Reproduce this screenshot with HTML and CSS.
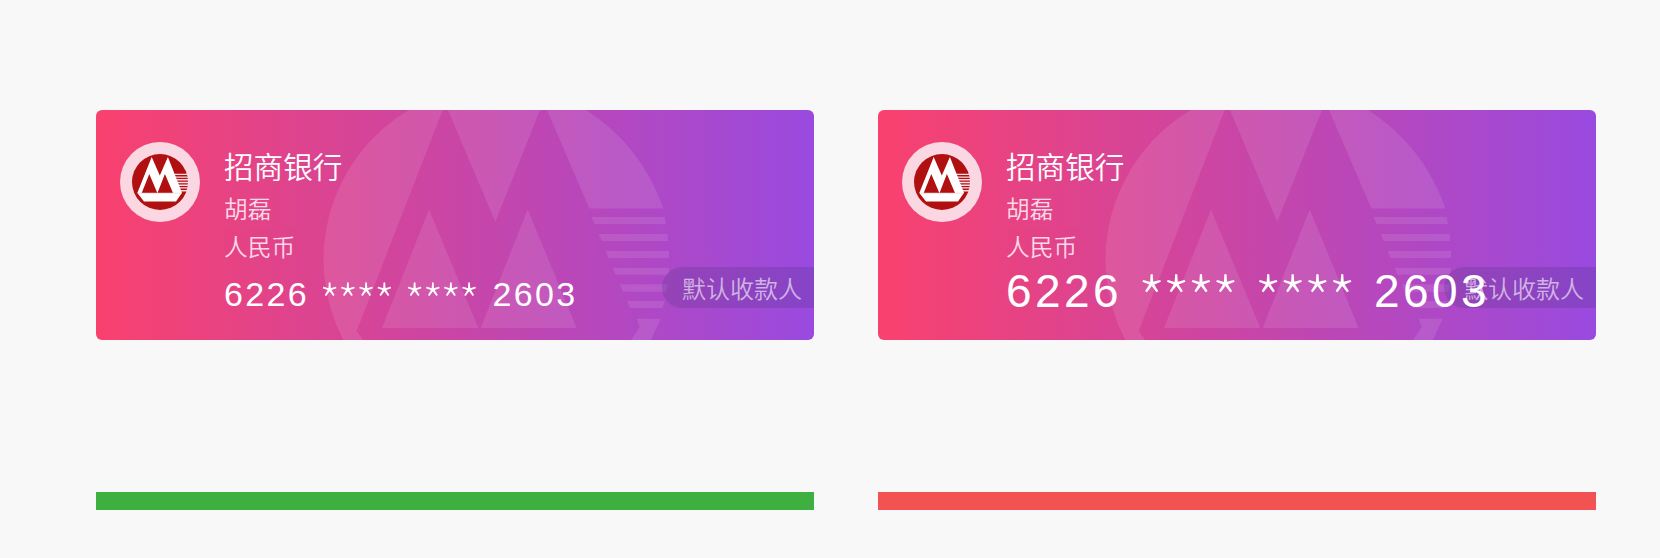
FILE: index.html
```html
<!DOCTYPE html>
<html lang="zh-CN">
<head>
<meta charset="utf-8">
<title>银行卡</title>
<link rel="stylesheet" href="styles.css">
</head>
<body>
<svg width="0" height="0" class="defs">
  <symbol id="mark" viewBox="0 0 718 230">
    <path d="M313 0A173.5 173.5 0 0 0 247.3 230H267.3L260.7 221 346.7 0ZM352 0 399.3 111.7 444 0ZM451 0 493.3 98.5H567.5Q545 35 490 0ZM333 99.5 286 218H382.3ZM431.7 99.5 384.7 218H480.7Z"/>
    <path d="M495.3 107H568.7L570 114H498.7ZM502.7 124H571.7L572 131H505.7ZM509.7 141H573V148H512.7ZM516.7 158H573L572.4 164.7H519.7ZM523.7 174.3H571.5L570.3 181.7H527ZM531 191H568.8L566.6 198H534.3ZM540.7 208.7H564.7L555 230H535L543.7 217Z"/>
  </symbol>
  <symbol id="logo" viewBox="0 0 80 80">
    <circle cx="40" cy="40" r="28" fill="#b01010"/>
    <path d="M54 31.8H68.500V33.100H54ZM54 34.400H68.500V35.800H54ZM54 37.100H68.500V38.500H54ZM54 39.800H68.500V41.300H54ZM54 42.500H68.500V43.900H54ZM54 45.200H68.500V46.600H54ZM54 47.900H68.500V49.500H54Z" fill="#fbdce5"/>
    <path fill="#fff" fill-rule="evenodd" d="M31.700 15 39.800 33.500 47.900 15 62 50.700 56 59.500H24L17.300 51ZM29.300 31.900 21.700 51H37.300ZM44.900 31.900 37.500 51H53Z"/>
    <path d="M18 51.200H61.500" stroke="#f3d5d8" stroke-width=".8"/>
  </symbol>
</svg>
<main class="board">
  <section class="column">
    <article class="card">
      <svg class="mark"><use href="#mark"/></svg>
      <div class="avatar"><svg width="80" height="80"><use href="#logo"/></svg></div>
      <div class="info">
        <h2 class="bank">招商银行</h2>
        <p class="line">胡磊</p>
        <p class="line">人民币</p>
        <p class="number"><span>6226</span><span class="stars">****</span><span class="stars">****</span><span class="tail">2603</span></p>
      </div>
      <span class="badge">默认收款人</span>
    </article>
    <div class="bar good"></div>
  </section>
  <section class="column">
    <article class="card">
      <svg class="mark"><use href="#mark"/></svg>
      <div class="avatar"><svg width="80" height="80"><use href="#logo"/></svg></div>
      <div class="info">
        <h2 class="bank">招商银行</h2>
        <p class="line">胡磊</p>
        <p class="line">人民币</p>
        <p class="number large"><span>6226</span><span class="stars">****</span><span class="stars">****</span><span class="tail">2603</span></p>
      </div>
      <span class="badge">默认收款人</span>
    </article>
    <div class="bar bad"></div>
  </section>
</main>
</body>
</html>
```
FILE: styles.css
```css
* { box-sizing: border-box; margin: 0; padding: 0; }
body { background: #f8f8f8; font-family: "Noto Sans CJK SC", sans-serif; font-weight: 350; }
.defs { display: block; }
.board { display: flex; gap: 64px; padding: 110px 64px 48px 96px; }
.column { width: 718px; display: flex; flex-direction: column; gap: 152px; }
.card { position: relative; display: flex; gap: 24px; height: 230px; padding: 32px 0 0 24px; border-radius: 6px; overflow: hidden; color: #fff; background: linear-gradient(90deg, #f9416e, #994adf); }
.mark { position: absolute; inset: 0; width: 718px; height: 230px; fill: rgba(255, 255, 255, .1); }
.avatar { position: relative; width: 80px; height: 80px; border-radius: 50%; background: rgba(253, 253, 253, .8); }
.avatar svg { display: block; }
.info { position: relative; z-index: 1; white-space: nowrap; padding-top: 3px; }
.bank { font-size: 29.6px; font-weight: 350; line-height: 42px; margin-bottom: 2px; }
.line { font-size: 23.7px; line-height: 38px; opacity: .8; }
.number { display: flex; align-items: flex-start; gap: 10px; padding-top: 5px; font: 34px/48px "Liberation Sans", Arial, sans-serif; letter-spacing: 2.3px; }
.stars { margin: -9px 2px -30px 0; font-family: "Noto Sans CJK SC", sans-serif; font-weight: 100; font-size: 1.5em; line-height: 80px; letter-spacing: -.07em; }
.tail { margin-left: 4px; }
.large { font-size: 46px; gap: 15px; letter-spacing: 3.4px; padding-top: 2px; }
.large .stars { margin: -21px 3px -40px 0; line-height: 104px; }
.badge { position: absolute; right: 0; top: 157px; height: 41px; padding: 0 12px 0 20px; border-radius: 21px 0 0 21px; background: rgba(80, 50, 130, .25); color: rgba(255, 255, 255, .6); font-size: 24px; line-height: 42px; }
.bar { height: 18px; }
.good { background: #3db03f; }
.bad { background: #f25352; }
```
